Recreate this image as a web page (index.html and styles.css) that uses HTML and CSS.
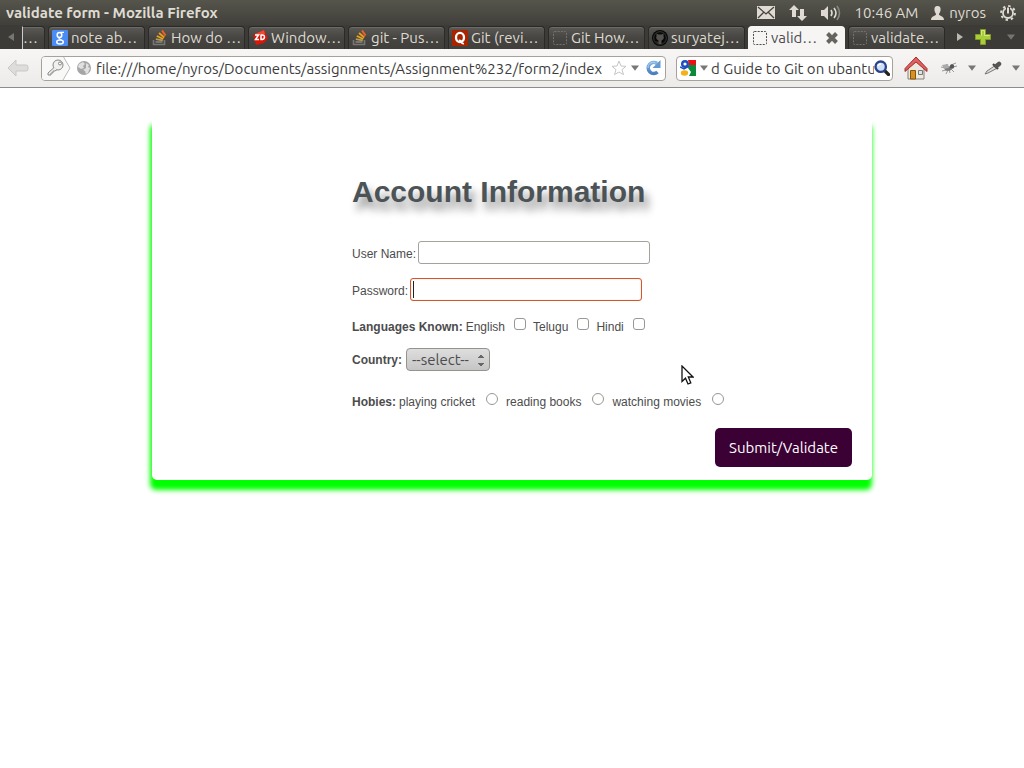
FILE: index.html
```html
<!DOCTYPE html>
<html lang="en">
<head>
<meta charset="utf-8">
<title>validate form</title>
<link rel="stylesheet" href="styles.css">
</head>
<body>
<svg class="defs" aria-hidden="true">
  <defs>
    <linearGradient id="reload" x1="0" y1="0" x2="0" y2="1"><stop offset="0" stop-color="#82b4e2"/><stop offset="1" stop-color="#4a80c0"/></linearGradient>
    <symbol id="stack" viewBox="0 0 16 16"><path d="M1.500 10v4.500h11V10" fill="none" stroke="#777" stroke-width="1.600"/><path d="M3.500 12h7" stroke="#888" stroke-width="1.600"/><path d="M3.800 9.200l7 1.200" stroke="#b99a55" stroke-width="1.700"/><path d="M4.800 6l6.500 3" stroke="#e8a51c" stroke-width="1.900"/><path d="M7 3l5.300 4.500" stroke="#f29a1a" stroke-width="1.900"/><path d="M10 .4l3.600 5.200" stroke="#e8622a" stroke-width="1.900"/></symbol>
    <symbol id="blank" viewBox="0 0 16 16"><rect x="1.500" y="1.500" width="13" height="13" rx="1" fill="none" stroke="currentColor" stroke-dasharray="2 1.200"/></symbol>
    <symbol id="down" viewBox="0 0 8 6"><path d="M0 .5h8L4 5.700z" fill="currentColor"/></symbol>
  </defs>
</svg>
<header class="browser">
  <div class="menubar">
    <strong class="window-title">validate form - Mozilla Firefox</strong>
    <div class="indicators">
      <svg class="mail" viewBox="0 0 18 13"><path fill="#dfdbd2" d="M0 0h18v13H0z"/><path d="M1 1l8 7 8-7M1 12l6-6M17 12l-6-6" fill="none" stroke="#45433d" stroke-width="1.300"/></svg>
      <svg class="network" viewBox="0 0 18 16"><path fill="#dfdbd2" d="M5 0l5 5H7v7H3V5H0zM13 16l5-5h-3V4h-4v7H8z"/></svg>
      <svg class="sound" viewBox="0 0 20 16"><path fill="#dfdbd2" d="M0 5h3l4-4v14l-4-4H0z"/><path d="M10 5q2 3 0 6M13 3q4 5 0 10" fill="none" stroke="#dfdbd2" stroke-width="1.600"/><path d="M16 1q5 7 0 14" fill="none" stroke="#89867f" stroke-width="1.600"/></svg>
      <span class="clock">10:46 AM</span>
      <span class="user"><svg class="person" viewBox="0 0 13 14"><path fill="#dfdbd2" d="M6.500 0C9 0 10 2 9.500 4.500 9.300 6.500 8 7 8 8.500c0 1.500 5 1 5 5.500H0c0-4.500 5-4 5-5.500C5 7 3.700 6.500 3.500 4.500 3 2 4 0 6.500 0z"/></svg>nyros</span>
      <svg class="power" viewBox="0 0 16 16"><circle cx="8" cy="8" r="5" fill="none" stroke="#dfdbd2" stroke-width="1.800"/><circle cx="8" cy="8" r="6.900" fill="none" stroke="#dfdbd2" stroke-width="2" stroke-dasharray="2.400 3.020"/><path d="M8 2v6" stroke="#45433d" stroke-width="4"/><path d="M8 2.500v6" stroke="#dfdbd2" stroke-width="2"/></svg>
    </div>
  </div>
  <nav class="tabs" aria-label="Tabs">
    <button class="scroll-left" aria-label="Scroll tabs left"><svg viewBox="0 0 6 8"><path fill="#777570" d="M6 0v8L0 4z"/></svg></button>
    <button class="tab partial">…</button>
    <button class="tab"><svg viewBox="0 0 16 16"><rect width="16" height="16" rx="1" fill="#4b8bf4"/><ellipse cx="7.500" cy="5" rx="2.300" ry="2.500" fill="none" stroke="#fff" stroke-width="1.500"/><ellipse cx="8" cy="12" rx="3.300" ry="2" fill="none" stroke="#fff" stroke-width="1.400"/><path d="M8.500 2.300h3.500M6.500 7.500q0 1.300 3 2.500" fill="none" stroke="#fff" stroke-width="1.200"/></svg>note ab…</button>
    <button class="tab"><svg><use href="#stack"/></svg>How do …</button>
    <button class="tab"><svg viewBox="0 0 16 16"><path fill="#d81708" d="M1 5l11-5 4 8-4 5-8 2z"/><path fill="#f04832" d="M3 4l9-4 1 4-9 2z"/><path fill="none" stroke="#fff" stroke-width="1.500" d="M3 5h3.500L3.500 9.500H7M9 5v4.500h1q2.500-.3 2.500-2.500T10 5H8.500"/></svg>Window…</button>
    <button class="tab"><svg><use href="#stack"/></svg>git - Pus…</button>
    <button class="tab"><svg viewBox="0 0 16 16"><path fill="#a82400" d="M0 0h16v16H0z"/><ellipse cx="8" cy="7.500" rx="4" ry="4.600" fill="none" stroke="#fff" stroke-width="2.300"/><path d="M7 10.500q2-.5 2.500 1.500t2.500 1.500" fill="none" stroke="#fff" stroke-width="1.700"/></svg>Git (revi…</button>
    <button class="tab dim"><svg><use href="#blank"/></svg>Git How…</button>
    <button class="tab"><svg viewBox="0 0 16 16"><circle cx="8" cy="8" r="8" fill="#080808"/><circle cx="8" cy="8" r="6.300" fill="none" stroke="#444" stroke-width=".8"/><path fill="#55534f" d="M4.500 3.500l2 1h3l2-1v2.500q1 2-.5 3.500L9.500 10.500V14h-3v-1.500Q5 13 4 11.500L6.500 12v-1.500L5 9.500Q3.500 8 4.500 6z"/></svg>suryatej…</button>
    <button class="tab active"><svg><use href="#blank"/></svg>valid…<svg class="close" viewBox="0 0 14 14"><path d="M2.500 2.500l9 9M11.500 2.500l-9 9" stroke="#66645f" stroke-width="4"/></svg></button>
    <button class="tab dim"><svg><use href="#blank"/></svg>validate…</button>
    <div class="tab-tools">
      <svg class="next" viewBox="0 0 6 8"><path fill="#bbb8b1" d="M0 0v8l6-4z"/></svg>
      <svg class="plus" viewBox="0 0 16 16"><path d="M5.500.5h5v5h5v5h-5v5h-5v-5h-5v-5h5z" fill="#a9cc3d" stroke="#7e9e24"/><path d="M6.500 6.500v-5h3v5h5" fill="none" stroke="#d4e88b"/></svg>
      <svg class="all" viewBox="0 0 8 6"><use href="#down"/></svg>
    </div>
  </nav>
  <div class="toolbar">
    <svg class="back" viewBox="0 0 22 18"><path d="M1 9l8-8v5h10q2 0 2 2v2q0 2-2 2H9v5z" fill="#dedddc" stroke="#c8c7c5"/></svg>
    <div class="address">
      <svg class="key" viewBox="0 0 30 24"><path d="M0 0h21l7 12-7 12H0z" fill="#f8f8f7"/><path d="M21 0l7 12-7 12" fill="none" stroke="#bbb"/><circle cx="16" cy="9" r="5" fill="#f0f0ef" stroke="#888"/><circle cx="18" cy="7.500" r="1.500" fill="#fff" stroke="#888"/><path d="M12 11.500l-6 5.500v2h3v-2h2v-2h2l2-1.500" fill="#eee" stroke="#888"/></svg>
      <svg class="globe" viewBox="0 0 14 14"><circle cx="7" cy="7" r="7" fill="#a5a5a5"/><path d="M2 3l4-2 2 2-2 2 1 2-3 1-3-2zM9 2l3 2-1 2 2 1-2 5-2 1-1-3-2-1 3-2z" fill="#e0e0e0"/></svg>
      <input class="url" aria-label="Address" value="file:///home/nyros/Documents/assignments/Assignment%232/form2/index">
      <svg class="star" viewBox="0 0 16 16"><path d="M8 1l2 5 5 .3-4 3.300 1.500 5L8 12l-4.500 2.600 1.500-5L1 6.300 6 6z" fill="#fff" stroke="#c5c5c5"/></svg>
      <svg class="arrow" viewBox="0 0 8 6"><use href="#down"/></svg>
      <svg class="reload" viewBox="0 0 16 16"><path d="M12 3.500A5.500 5.500 0 1 0 12.500 12" fill="none" stroke="url(#reload)" stroke-width="3.600"/><path d="M15.500 0v8H7.500z" fill="#639ad4"/><path d="M10.500 3A5 5 0 0 0 3 8" fill="none" stroke="#b1d0ed"/></svg>
    </div>
    <div class="search">
      <svg class="google" viewBox="0 0 16 16"><path fill="#fff" d="M0 0h16v16H0z"/><path fill="#e11" d="M8 0h8v5H9z"/><path fill="#0a8b3b" d="M9 5h7v11H9l2-4-3-4z"/><circle cx="5" cy="4" r="2.800" fill="#fff" stroke="#1b50bd" stroke-width="2.400"/><path d="M0 7l4 2 5-3" fill="none" stroke="#1b50bd" stroke-width="1.500"/><ellipse cx="4.500" cy="13" rx="3.700" ry="2.700" fill="#f5b218"/></svg>
      <svg class="arrow" viewBox="0 0 8 6"><use href="#down"/></svg>
      <input class="query" aria-label="Search" value="d Guide to Git on ubantu">
      <svg class="lens" viewBox="0 0 16 16"><path d="M10.500 10.500l4 4" stroke="#222" stroke-width="3.200" stroke-linecap="round"/><circle cx="6.700" cy="6.700" r="5.200" fill="#cfdff5" stroke="#2a4390" stroke-width="2.400"/><path d="M4 6q.5-2 3-2" fill="none" stroke="#fff" stroke-width="1.500"/></svg>
    </div>
    <svg class="home" viewBox="0 0 24 24"><path d="M4 11l8-7 8 7v12H4z" fill="#eee9df" stroke="#858078"/><path d="M6.500 14.500h5V23h-5z" fill="#d69220" stroke="#86550b"/><path d="M14.500 14.500h4v4h-4z" fill="#dce5ed" stroke="#777"/><path d="M1 12.500L12 1l11 11.500v3L12 6 1 15.500z" fill="#d95555" stroke="#a62f2f"/><path d="M12 2L2 12.500v1L12 5l10 8.500v-1z" fill="#de6464"/></svg>
    <svg class="bug" viewBox="0 0 18 16"><path d="M1 7l5 1M2 11l4-1M6 14l2-4M10 13l-1-4M14 12l-3-3M13 7l4-1M11 5l5-2M6 4l2 2" stroke="#999" fill="none"/><ellipse cx="8" cy="8.500" rx="3.500" ry="2.300" fill="#777"/><circle cx="12" cy="6.500" r="2.200" fill="#555"/><path d="M2 5l6-1 1 4-5 1z" fill="#aaa"/></svg>
    <svg class="arrow" viewBox="0 0 8 6"><use href="#down"/></svg>
    <svg class="dropper" viewBox="0 0 18 16"><path d="M10.500 6L3 11l-2 3 3-1 8.500-4.500" fill="#ddd" stroke="#777"/><path d="M9 4l5 5" stroke="#444" stroke-width="2.200"/><path d="M12.500 6L15 4" stroke="#555" stroke-width="4.500" stroke-linecap="round"/></svg>
    <svg class="arrow" viewBox="0 0 8 6"><use href="#down"/></svg>
  </div>
</header>
<main class="page">
  <form class="card">
    <h1>Account Information</h1>
    <div class="row field"><label for="name">User Name:</label><input class="text" id="name" type="text"></div>
    <div class="row field"><label for="pass">Password:</label><input class="text focused" id="pass" type="password"></div>
    <div class="row choices languages" role="group" aria-labelledby="langs">
      <b id="langs">Languages Known:</b>
      <label>English<input type="checkbox"></label>
      <label>Telugu<input type="checkbox"></label>
      <label>Hindi<input type="checkbox"></label>
    </div>
    <div class="row country"><label for="country"><b>Country:</b></label><select id="country"><option>--select--</option></select></div>
    <div class="row choices hobbies" role="group" aria-labelledby="hobbies">
      <b id="hobbies">Hobies:</b>
      <label>playing cricket<input type="radio" name="hobby"></label>
      <label>reading books<input type="radio" name="hobby"></label>
      <label>watching movies<input type="radio" name="hobby"></label>
    </div>
    <button class="submit" type="button">Submit/Validate</button>
  </form>
</main>
<svg class="pointer" viewBox="0 0 13 20"><path d="M1 1v15.500l3.500-3.300L7 19l2.800-1.200L7.300 12H12z" fill="#fff" stroke="#111" stroke-width="1.300"/></svg>
</body>
</html>
```
FILE: styles.css
```css
* { box-sizing: border-box; }
body { margin: 0; background: #fff; font-family: Ubuntu, "Noto Sans", sans-serif; font-size: 15px; }
button, input, select { font: inherit; color: inherit; margin: 0; }
svg { flex: none; display: block; }
.defs { position: absolute; width: 0; height: 0; }

.browser { background: #3f3e39; }
.menubar { display: flex; justify-content: space-between; align-items: center; height: 25px; padding: 0 8px 0 6px; background: linear-gradient(#56554c, #403f3a); color: #dfdbd2; line-height: 24px; }
.indicators { display: flex; align-items: center; gap: 14px; }
.mail { width: 18px; height: 13px; }
.network { width: 18px; height: 16px; }
.sound { width: 20px; height: 16px; }
.clock { margin-right: -1px; }
.user { display: flex; align-items: center; gap: 5px; }
.person { width: 13px; height: 14px; }
.power { width: 16px; height: 16px; }

.tabs { display: flex; gap: 3px; height: 24px; background: #3c3b37; }
.scroll-left { display: flex; align-items: center; width: 19px; padding: 0 0 0 8px; border: 0; background: none; }
.scroll-left svg { width: 6px; height: 8px; }
.tab { display: flex; flex: 1; min-width: 0; align-items: center; gap: 3px; padding: 0 3px; margin-top: 1px; overflow: hidden; white-space: nowrap; border: 1px solid #2b2a27; border-bottom: 0; border-radius: 4px 4px 0 0; background: linear-gradient(#5a5955, #464541 50%, #403f3b); box-shadow: inset 0 1px #6b6a66; color: #dfdbd2; line-height: 22px; }
.tab svg { width: 16px; height: 16px; }
.tab.partial { flex: none; width: 23px; padding: 0; border-left: 1px solid #ccc; border-radius: 0 4px 0 0; }
.tab.dim svg { color: #74736f; }
.tab.active { background: #f6f5f4; border-color: #f6f5f4; box-shadow: none; color: #4c4c4c; }
.tab .close { width: 14px; height: 14px; margin-left: auto; margin-right: 2px; }
.tab-tools { display: flex; align-items: center; gap: 12px; padding: 0 9px; color: #777570; }
.next { width: 6px; height: 8px; }
.plus { width: 16px; height: 16px; }
.all { width: 8px; height: 6px; margin-left: 4px; }

.toolbar { display: flex; align-items: center; height: 39px; padding: 0 4px 0 7px; background: linear-gradient(#f7f6f5, #edebe9); border-bottom: 1px solid #8d8c8a; color: #777; }
.back { width: 22px; height: 18px; margin-right: 12px; }
.address, .search { display: flex; align-items: center; height: 25px; border: 1px solid #a5a19b; border-radius: 4px; background: #fff; overflow: hidden; }
.address { flex: 619; min-width: 0; padding-right: 4px; }
.search { flex: 210; min-width: 0; margin: 0 11px 0 10px; padding: 0 2px 0 3px; }
.key { width: 30px; height: 24px; }
.globe { width: 14px; height: 14px; margin: 0 5px; }
.url, .query { flex: 1; min-width: 0; padding: 0; border: 0; background: none; color: #3c3c3c; outline: 0; }
.star { width: 16px; height: 16px; margin-right: 4px; }
.arrow { width: 8px; height: 6px; }
.reload { width: 16px; height: 16px; margin-left: 6px; }
.google { width: 16px; height: 16px; margin-right: 4px; }
.query { margin-left: 3px; }
.lens { width: 16px; height: 16px; }
.home { width: 24px; height: 24px; margin-right: 12px; }
.bug, .dropper { width: 18px; height: 16px; margin-right: 10px; }
.dropper { margin-left: 8px; }

.page { padding: 28px 16px; }
.card { display: flex; flex-direction: column; max-width: 720px; margin: 0 auto; padding: 58px 20px 13px 200px; border-radius: 5px; background: #fff; box-shadow: -1px 9px 5px 1px #0f0; color: #4c4c4c; font-family: "Liberation Sans", Arial, sans-serif; font-size: 12px; line-height: 17px; }
h1 { margin: 0 0 31px; color: #4c5356; font-size: 30px; line-height: 36px; text-shadow: 4px 8px 9px #888; }
.row { display: flex; }
.field { margin-bottom: 14px; gap: 2px; }
.field label { padding-top: 5px; }
.text { width: 232px; height: 23px; padding: 2px 3px; border: 1px solid #a5a19b; border-radius: 3px; background: #fff; outline: 0; }
.text.focused { border-color: #d3562c; background: linear-gradient(#222, #222) 2px 2px / 1px 17px no-repeat; box-shadow: inset 0 0 1px #e59478; }
.choices { gap: 3px; padding-top: 1px; line-height: 19px; white-space: nowrap; }
.choices label { display: flex; }
.choices input { appearance: none; width: 12px; height: 12px; border: 1px solid #9a9792; border-radius: 3px; background: #fff; }
.choices input[type="radio"] { border-radius: 50%; }
.languages { padding-top: 3px; }
.languages label { gap: 9px; margin-right: 4px; }
.hobbies label { gap: 11px; margin-right: 5px; }
.country { align-items: center; gap: 4px; margin: 11px 0 21px; }
.country label { padding-top: 2px; }
.country select { appearance: none; width: 84px; height: 23px; padding: 0 5px; border: 1px solid #96938e; border-radius: 4px; font-family: Ubuntu, "Noto Sans", sans-serif; font-size: 15px; background-color: #d0d0d0; background-image: conic-gradient(from 143deg at 50% 0, #666 74deg, transparent 0), conic-gradient(from -37deg at 50% 100%, #666 74deg, transparent 0), linear-gradient(#dedede, #c5c5c5); background-image: conic-gradient(from 143deg at 50% 0, #666 74deg, transparent 0), conic-gradient(from -37deg at 50% 100%, #666 74deg, transparent 0), linear-gradient(#dedede, #c5c5c5); background-size: 6px 4px, 6px 4px, 100% 100%; background-position: 71px 5px, 71px 14px, 0 0; background-repeat: no-repeat; }
.submit { align-self: flex-end; height: 39px; margin-top: 16px; padding: 0 14px; border: 0; border-radius: 5px; background: #3b0034; color: #fff; font-family: Ubuntu, "Noto Sans", sans-serif; font-size: 15px; }
.pointer { position: absolute; left: 681px; top: 365px; width: 13px; height: 20px; }
```
